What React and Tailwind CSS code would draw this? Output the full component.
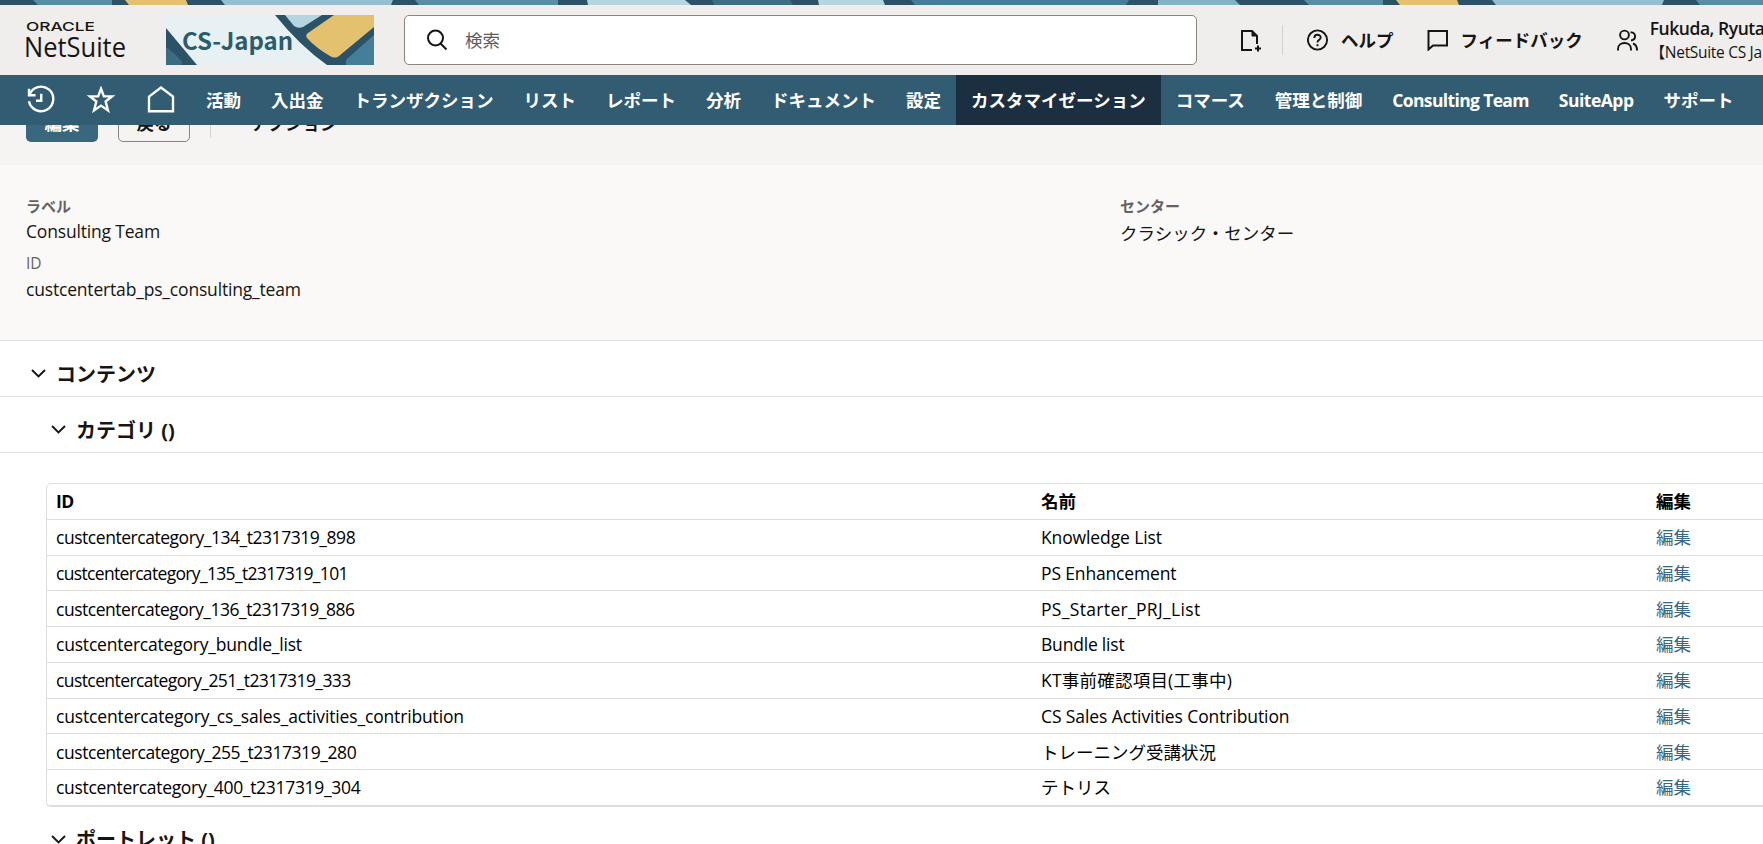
import React from 'react';

const navItems = [
  { label: '活動' },
  { label: '入出金' },
  { label: 'トランザクション' },
  { label: 'リスト' },
  { label: 'レポート' },
  { label: '分析' },
  { label: 'ドキュメント' },
  { label: '設定' },
  { label: 'カスタマイゼーション', active: true },
  { label: 'コマース' },
  { label: '管理と制御' },
  { label: 'Consulting Team', className: 'tracking-[-0.64px]' },
  { label: 'SuiteApp', className: 'tracking-[-0.5px]' },
  { label: 'サポート' },
];

const categories = [
  { id: 'custcentercategory_134_t2317319_898', name: 'Knowledge List', idClass: 'tracking-[-0.46px]', nameClass: 'tracking-[-0.12px]' },
  { id: 'custcentercategory_135_t2317319_101', name: 'PS Enhancement', idClass: 'tracking-[-0.67px]', nameClass: 'tracking-[-0.15px]' },
  { id: 'custcentercategory_136_t2317319_886', name: 'PS_Starter_PRJ_List', idClass: 'tracking-[-0.48px]', nameClass: 'tracking-[0.33px]' },
  { id: 'custcentercategory_bundle_list', name: 'Bundle list', idClass: 'tracking-[-0.2px]', nameClass: 'tracking-[-0.2px]' },
  { id: 'custcentercategory_251_t2317319_333', name: 'KT事前確認項目(工事中)', idClass: 'tracking-[-0.59px]', nameClass: 'tracking-[0.22px]' },
  { id: 'custcentercategory_cs_sales_activities_contribution', name: 'CS Sales Activities Contribution', idClass: 'tracking-[-0.15px]', nameClass: 'tracking-[-0.1px]' },
  { id: 'custcentercategory_255_t2317319_280', name: 'トレーニング受講状況', idClass: 'tracking-[-0.43px]' },
  { id: 'custcentercategory_400_t2317319_304', name: 'テトリス', idClass: 'tracking-[-0.31px]' },
];

// Decorative strip above the header: [start x, end x, slant of each edge, colour]
const stripes = [
  [33, 112, 5, 0, '#568ea6'],
  [125, 186, 4, 2, '#e3c16f'],
  [221, 393, 4, -2, '#95bfd0'],
  [415, 558, 4, 0, '#568ea6'],
  [587, 685, 1, 6, '#b5d6e0'],
  [712, 790, 2, 3, '#3c6f84'],
  [818, 883, 1, 2, '#b5d6e0'],
  [911, 1129, 4, -3, '#457e99'],
  [1158, 1235, 0, 5, '#82b3c4'],
  [1304, 1383, 5, 0, '#568ea6'],
  [1396, 1457, 4, 2, '#e3c16f'],
  [1492, 1664, 4, -2, '#95bfd0'],
  [1696, 1763, 4, 0, '#568ea6'],
];

const TopStrip = () => (
  <svg className="block h-[5px] w-[1763px] bg-[#2b5266]" viewBox="0 0 1763 5">
    {stripes.map(([x1, x2, s1, s2, fill]) => (
      <polygon key={x1} fill={fill} points={`${x1},0 ${x2},0 ${x2 + s2},5 ${x1 + s1},5`} />
    ))}
  </svg>
);

const Logo = () => (
  <svg className="ml-[25px] h-[50px] w-[102px] shrink-0 overflow-visible" viewBox="0 0 102 50" fill="#161513">
    <text x="1" y="16" fontFamily="Inter" fontSize="12" fontWeight="500" textLength="69" lengthAdjust="spacingAndGlyphs">ORACLE</text>
    <text x="-1" y="41.6" fontFamily="Open Sans" fontSize="27" textLength="102" lengthAdjust="spacingAndGlyphs">NetSuite</text>
  </svg>
);

const Banner = () => (
  <svg className="ml-[39px] h-[50px] w-[208px] shrink-0" viewBox="0 0 208 50">
    <rect width="208" height="50" fill="#e7f1f4" />
    <path d="M0 13L31 50H0z" fill="#2b5266" />
    <path d="M0 32Q11 40 16 47Q17 49 15 50H0z" fill="#3a6d84" />
    <path d="M109 0H208V50H161Q134 31 109 0z" fill="#2b5266" />
    <path d="M119 0H156L137 12Q132 14 128 11z" fill="#b5d6e0" />
    <path d="M168 0H208V12L173 41Q169 44 164 41Q150 33 141 23Q139 20 142 18z" fill="#e3c16f" />
    <path d="M208 20V50H180Q179 45 182 43z" fill="#457e99" />
    <text x="16" y="35" fill="#2c5c6c" fontFamily="Noto Sans CJK JP" fontSize="24" fontWeight="700" textLength="111" lengthAdjust="spacingAndGlyphs">CS-Japan</text>
  </svg>
);

const Icon = ({ className, children }) => (
  <svg className={className} viewBox="0 0 24 24" fill="none" stroke="currentColor" strokeWidth="1.9">
    {children}
  </svg>
);

const Chevron = () => (
  <svg className="-mt-[2px] h-[9px] w-[15px]" viewBox="0 0 15 9" fill="none" stroke="#161513" strokeWidth="1.9">
    <path d="M1 1L7.5 7.5L14 1" />
  </svg>
);

const Header = () => (
  <div className="flex h-[70px] items-center bg-[#f0eeed] text-[#161513]">
    <Logo />
    <Banner />
    <div className="ml-[30px] flex h-[50px] w-[793px] shrink-0 items-center rounded-[5px] border border-[#8b8580] bg-white">
      <svg className="ml-[21px] h-[22px] w-[22px]" viewBox="0 0 22 22" fill="none" stroke="currentColor" strokeWidth="2">
        <circle cx="9.5" cy="9" r="7.5" />
        <path d="M14.5 14.5L20.5 20.5" />
      </svg>
      <span className="ml-[17px] text-[17.5px] text-[#5f5c59]">検索</span>
    </div>
    <svg className="ml-[43px] h-[24px] w-[22px] shrink-0" viewBox="0 0 22 24" fill="none" stroke="currentColor" strokeWidth="2">
      <path d="M12 22H2V3H12L17 8V16" />
      <path d="M12 3V8H17z" fill="currentColor" strokeWidth="1" />
      <path d="M18 17.5V23.5M15 20.5H21" />
    </svg>
    <div className="ml-[20px] h-[30px] w-px shrink-0 bg-[#d4d1ce]" />
    <svg className="ml-[24px] h-[22px] w-[22px] shrink-0" viewBox="0 0 22 22" fill="none" stroke="currentColor" strokeWidth="1.9">
      <circle cx="10.5" cy="11" r="9.6" />
      <path d="M7.3 9C7.3 4.8 13.7 4.8 13.7 8.6C13.7 10.8 10.5 10.8 10.5 13.4" />
      <path d="M10.5 15.2V17.2" />
    </svg>
    <span className="ml-[12px] shrink-0 text-[17.5px] font-bold">ヘルプ</span>
    <svg className="ml-[33px] h-[22px] w-[22px] shrink-0" viewBox="0 0 22 22" fill="none" stroke="currentColor" strokeWidth="2">
      <path d="M1.5 2H20V16.5H6L1.5 20.5z" />
    </svg>
    <span className="ml-[12px] shrink-0 text-[17.5px] font-bold">フィードバック</span>
    <svg className="ml-[33px] h-[22px] w-[22px] shrink-0" viewBox="0 0 22 22" fill="none" stroke="currentColor" strokeWidth="1.9">
      <circle cx="8.5" cy="6" r="4.4" />
      <path d="M2 21.5V20C2 12 15 12 15 20V21.5" />
      <path d="M14.5 3.5C20 2.5 21 10.5 15 11.5" />
      <path d="M17 14.5C20 15.5 21 18 21 21.5" />
    </svg>
    <div className="-mt-px ml-[12px] shrink-0 whitespace-nowrap">
      <div className="text-[17.5px] leading-[24px] font-semibold tracking-[-0.45px]">Fukuda, Ryuta</div>
      <div className="text-[15.5px] leading-[24px] tracking-[-0.3px]">【NetSuite CS Ja</div>
    </div>
  </div>
);

const NavBar = () => (
  <nav className="flex h-[50px] items-center bg-[#325c72] text-[17.5px] font-bold text-white">
    <Icon className="ml-[26px] h-[30px] w-[30px] shrink-0">
      <path d="M2.4 3V8.2H7.6" />
      <path d="M2.8 7.8A9.8 9.8 0 1 1 2.4 13" />
      <path d="M12.2 7V12.6H8" />
    </Icon>
    <Icon className="ml-[30px] h-[30px] w-[30px] shrink-0">
      <path d="M12 3L14.3 9.1H20.8L15.7 13.2L17.6 20.3L12 16.5L6.4 20.3L8.3 13.2L3.2 9.1H9.7z" />
    </Icon>
    <Icon className="ml-[30px] h-[30px] w-[30px] shrink-0">
      <path d="M2.4 9.3L12 2L21.6 9.3V21H2.4z" />
    </Icon>
    <div className="ml-[15px] flex h-full">
      {navItems.map((item) => (
        <div
          key={item.label}
          className={`flex h-full shrink-0 items-center px-[15px] whitespace-nowrap ${item.active ? 'bg-[#1c2f41]' : ''} ${item.className || ''}`}
        >
          {item.label}
        </div>
      ))}
    </div>
  </nav>
);

const Actions = () => (
  <div className="-mt-5 flex h-[60px] items-start bg-[#f5f4f2] pl-[26px] text-[17.5px] font-bold text-[#161513]">
    <button className="h-[37px] w-[72px] rounded-[5px] bg-[#39677d] text-white">編集</button>
    <button className="ml-[20px] h-[37px] w-[72px] rounded-[5px] border border-[#8b8580]">戻る</button>
    <div className="ml-[20px] h-[33px] w-px bg-[#d4d1ce]" />
    <span className="ml-[40px] leading-[37px]">アクション</span>
  </div>
);

const Section = ({ title, nested }) => (
  <div className={`flex h-[56px] items-center border-b border-[#e1e0de] pt-3 ${nested ? 'pl-[51px]' : 'pl-[31px]'}`}>
    <Chevron />
    <h2 className="ml-[10px] text-[20px] leading-[30px] font-bold text-[#161513]">{title}</h2>
  </div>
);

const CategoryTable = () => (
  <div className="mt-[30px] ml-[46px] w-[1760px] rounded-[5px] border border-[#dfdedd] text-[17.5px] text-black">
    <div className="flex h-[35.75px] items-center border-b border-[#dfdedd] font-bold">
      <div className="w-[985px] pl-[9px] tracking-[-0.5px]">ID</div>
      <div className="w-[615px] pl-[9px]">名前</div>
      <div className="pl-[9px]">編集</div>
    </div>
    {categories.map((c) => (
      <div key={c.id} className="flex h-[35.75px] items-center border-b border-[#dfdedd]">
        <div className={`w-[985px] pl-[9px] ${c.idClass}`}>{c.id}</div>
        <div className={`w-[615px] pl-[9px] ${c.nameClass || ''}`}>{c.name}</div>
        <a className="pl-[9px] text-[#39677d]">編集</a>
      </div>
    ))}
  </div>
);

const App = () => {
  return (
    <div className="h-[844px] w-[1763px] overflow-hidden bg-white font-['Open_Sans','Noto_Sans_CJK_JP',sans-serif]">
      {/* Header */}
      <header className="relative z-10">
        <TopStrip />
        <Header />
        <NavBar />
      </header>

      <Actions />

      {/* Main fields */}
      <div className="flex h-[176px] border-b border-[#e1e0de] bg-[#fbf9f8] pt-[30px] pl-[26px] text-[17.5px] text-[#161513]">
        <div className="w-[1094px]">
          <div className="text-[15px] leading-[22px] font-bold text-[#66625f]">ラベル</div>
          <div className="leading-[29px] tracking-[-0.18px]">Consulting Team</div>
          <div className="mt-[5px] text-[15.5px] leading-[24px] font-medium text-[#66625f]">ID</div>
          <div className="leading-[29px] tracking-[-0.18px]">custcentertab_ps_consulting_team</div>
        </div>
        <div>
          <div className="text-[15px] leading-[22px] font-bold text-[#66625f]">センター</div>
          <div className="leading-[33px]">クラシック・センター</div>
        </div>
      </div>

      {/* Contents */}
      <Section title="コンテンツ" />
      <Section title="カテゴリ ()" nested />
      <CategoryTable />
      <Section title="ポートレット ()" nested />
    </div>
  );
};

export default App;
